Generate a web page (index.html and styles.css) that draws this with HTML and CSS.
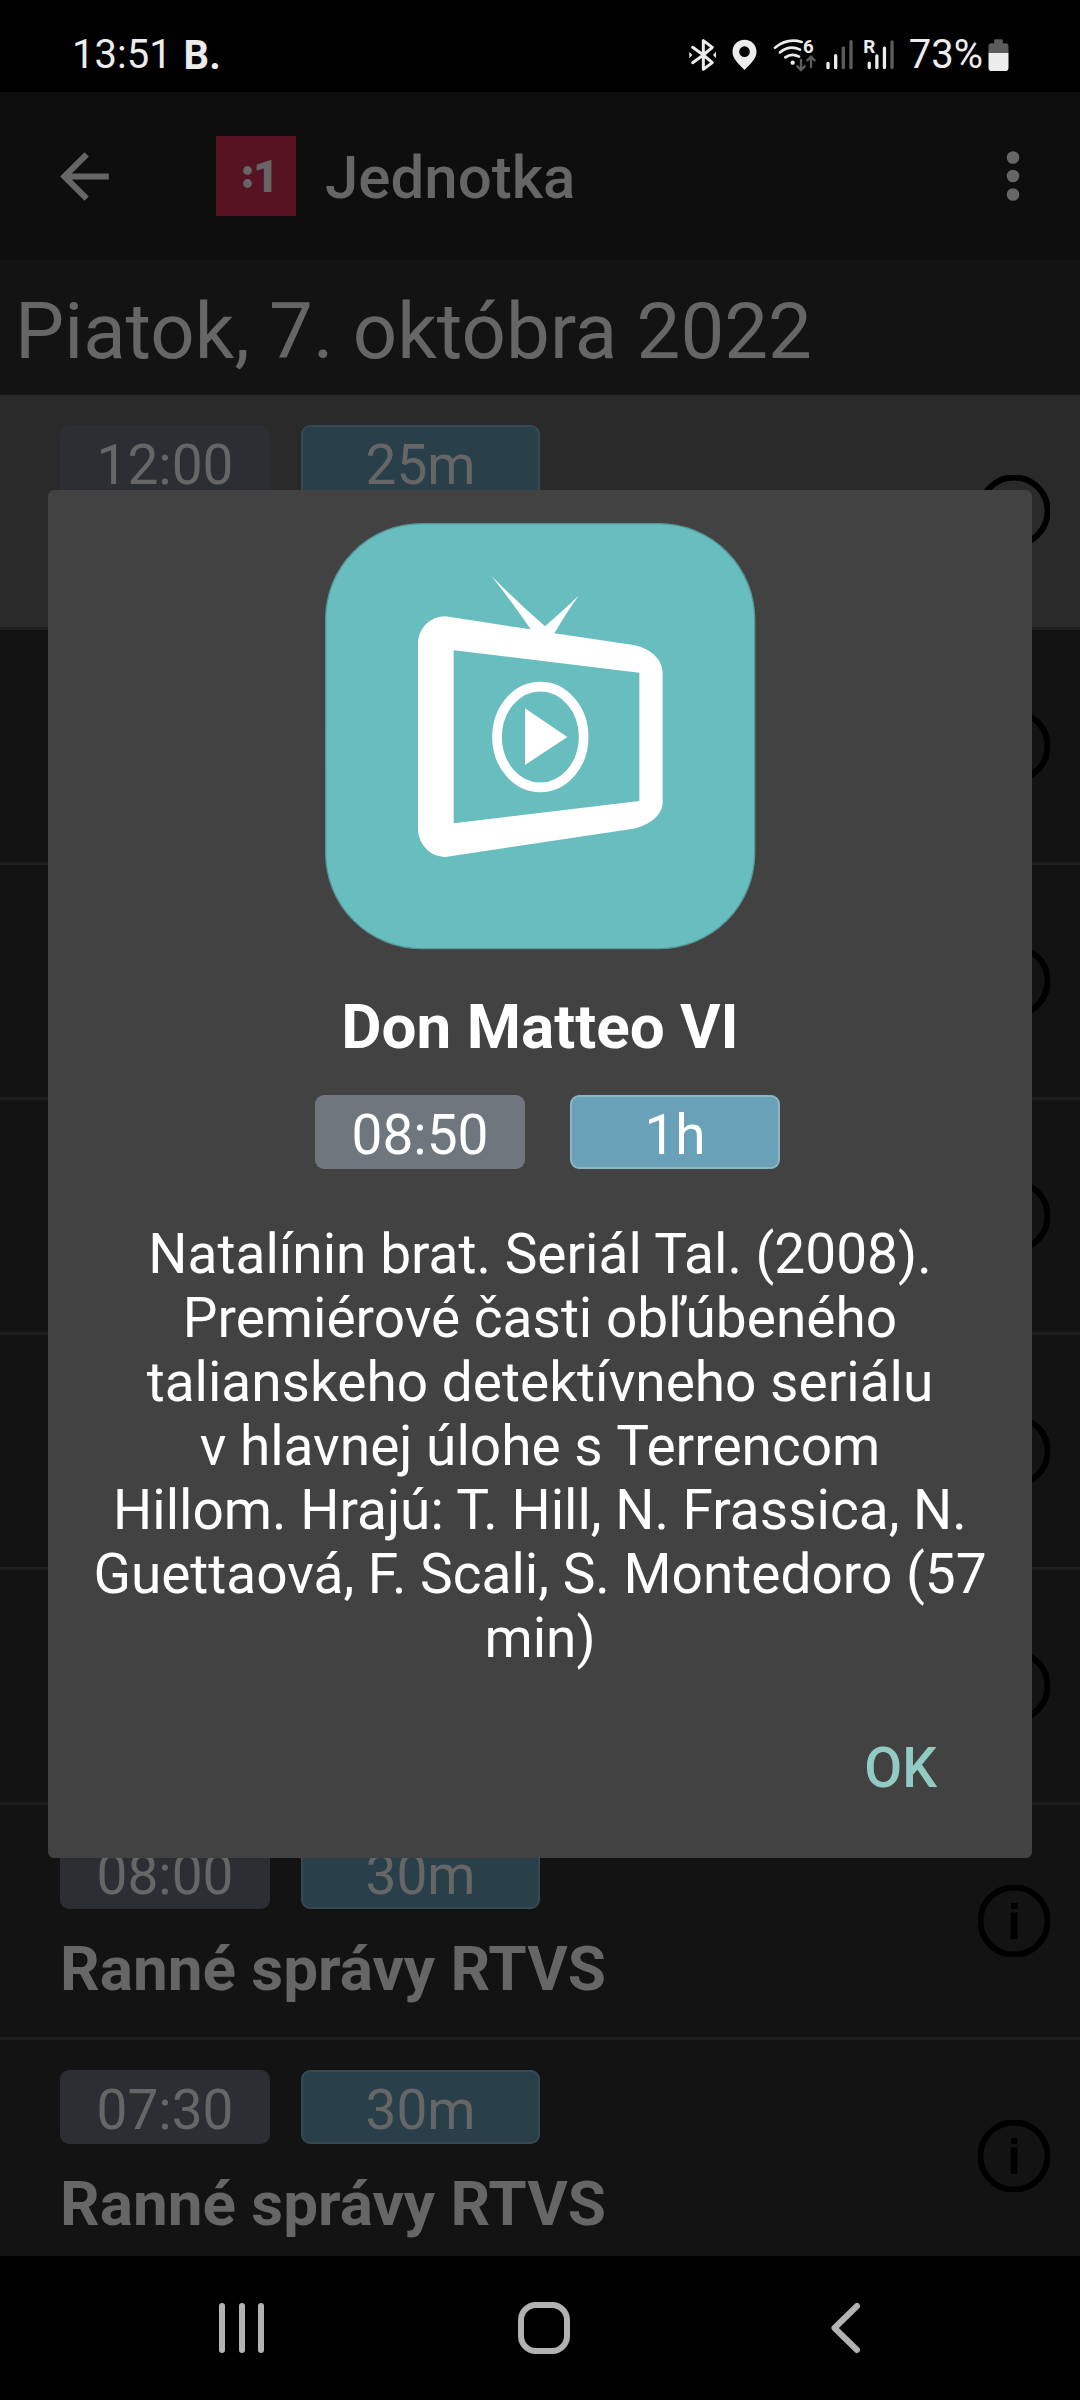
FILE: index.html
```
<!DOCTYPE html>
<html lang="sk">
<head>
<meta charset="utf-8">
<title>Jednotka</title>
<link rel="stylesheet" href="styles.css">
</head>
<body>
<svg class="defs" aria-hidden="true">
  <symbol id="info" viewBox="0 0 72 72">
    <circle cx="36" cy="36" r="33.6" fill="none" stroke="#000" stroke-width="6"/>
    <path d="M33 18h6.4v6H33zM32.6 27.5h6.8V54h-6.8z"/>
  </symbol>
</svg>
<div class="screen">
  <header class="status">
    <span class="clock">13:51</span>
    <span class="notif">B.</span>
    <div class="status-icons">
      <svg class="i-bt" viewBox="85 111 90 108" fill="none" stroke="#ececec" stroke-width="9" stroke-linecap="round" stroke-linejoin="round">
        <path d="M99 142L131 165L99 188M131 165L158 142L131 122V208L158 188L131 165"/>
        <path d="M89 155v20l9-10zM169 155v20l-9-10z" fill="#ececec" stroke="none"/>
      </svg>
      <svg class="i-pin" viewBox="215 111 80 108" fill="#ececec">
        <path fill-rule="evenodd" d="M255 119c-21 0-36 16-36 36 0 20 16 34 36 55 20-21 36-35 36-55 0-20-15-36-36-36zm0 20a16 16 0 1 1 0 32a16 16 0 0 1 0-32z"/>
      </svg>
      <svg class="i-wifi" viewBox="340 111 132 108" fill="none" stroke="#ececec" stroke-width="8" stroke-linecap="round">
        <path d="M346 143Q383 113 426 126M361 157Q390 134 421 149M377 172Q397 158 418 170"/>
        <circle cx="399" cy="188" r="6.5" fill="#ececec" stroke="none"/>
        <g stroke="#5c5c5c" stroke-width="7"><path d="M424 180v29M413 199l11 11l11-11M454 201v-30M443 181l11-11l11 11"/></g>
        <text class="glyph" x="430" y="159" font-size="56">6</text>
      </svg>
      <svg class="i-sig" viewBox="495 111 87 108" stroke="#ececec" stroke-width="10" stroke-linecap="round">
        <path d="M504 190v13M527 167v36"/><path stroke="#5c5c5c" d="M550 144v59M573 125v78"/>
      </svg>
      <svg class="i-rsig" viewBox="608 111 97 108" stroke="#ececec" stroke-width="10" stroke-linecap="round">
        <path d="M627 190v13M650 168v35M673 144v59"/><path stroke="#5c5c5c" d="M696 125v78"/>
        <text class="glyph" x="609" y="160" font-size="57">R</text>
      </svg>
    </div>
    <span class="pct">73%</span>
    <svg class="i-bat" viewBox="980 111 68 108">
      <path fill="#5c5c5c" d="M1001 130v-8q0-4 4-4h18q4 0 4 4v8h8q9 0 9 9v20h-60v-20q0-9 9-9z"/>
      <path fill="#ececec" d="M984 159h60v44q0 10-10 10h-40q-10 0-10-10z"/>
    </svg>
  </header>

  <div class="appbar">
    <svg class="back" viewBox="0 0 24 24"><path d="M20 11H7.83l5.59-5.59L12 4l-8 8 8 8 1.41-1.41L7.83 13H20v-2z"/></svg>
    <svg class="logo" viewBox="0 0 80 80"><circle cx="31.5" cy="34.5" r="4.4"/><circle cx="31.5" cy="47.5" r="4.4"/><text x="37" y="56">1</text></svg>
    <h1>Jednotka</h1>
    <svg class="more" viewBox="0 0 14 50"><circle cx="7" cy="6.5" r="6.3"/><circle cx="7" cy="25" r="6.3"/><circle cx="7" cy="43.5" r="6.3"/></svg>
  </div>

  <h2 class="date">Piatok, 7. októbra 2022</h2>

  <main class="list">
    <div class="row current"><div><div class="pills"><span class="pill">12:00</span><span class="pill dur">25m</span></div></div><svg class="info"><use href="#info"/></svg></div>
    <div class="row"><div></div><svg class="info"><use href="#info"/></svg></div>
    <div class="row"><div></div><svg class="info"><use href="#info"/></svg></div>
    <div class="row"><div></div><svg class="info"><use href="#info"/></svg></div>
    <div class="row"><div></div><svg class="info"><use href="#info"/></svg></div>
    <div class="row"><div></div><svg class="info"><use href="#info"/></svg></div>
    <div class="row"><div><div class="pills"><span class="pill">08:00</span><span class="pill dur">30m</span></div><div class="name">Ranné správy RTVS</div></div><svg class="info"><use href="#info"/></svg></div>
    <div class="row"><div><div class="pills"><span class="pill">07:30</span><span class="pill dur">30m</span></div><div class="name">Ranné správy RTVS</div></div><svg class="info"><use href="#info"/></svg></div>
  </main>

  <nav class="nav">
    <svg viewBox="0 0 72 60" stroke-width="6"><path d="M16 8v44M36 8v44M55 8v44"/></svg>
    <svg viewBox="0 0 72 60" stroke-width="6"><rect x="13" y="7" width="46" height="46" rx="15"/></svg>
    <svg viewBox="0 0 72 60" stroke-width="6"><path d="M47 8L24.5 30L47 52"/></svg>
  </nav>

  <section class="dialog" role="dialog">
    <svg class="tv" viewBox="0 0 1440 1410">
      <rect x="77" y="71" width="1287" height="1275" rx="287" fill="#68bdbf" stroke="#56989a" stroke-width="4"/>
      <g fill="#fff">
        <path fill-rule="evenodd" d="M354 435C354 383 392 349 436 349L692 388Q640 312 574 227Q650 305 735 379Q785 335 836 287Q800 337 763 400L1000 435C1055 446 1088 480 1088 520V905C1088 945 1050 975 1000 986L436 1071C392 1071 354 1035 354 985zM461 451V970L1018 903V518z"/>
        <path d="M675 625L802 711L675 795z"/>
      </g>
      <ellipse cx="721" cy="711" rx="130" ry="151" fill="none" stroke="#fff" stroke-width="29"/>
    </svg>
    <h3>Don Matteo VI</h3>
    <div class="pills"><span class="pill">08:50</span><span class="pill dur">1h</span></div>
    <p>Natalínin brat. Seriál Tal. (2008).<br>Premiérové časti obľúbeného<br>talianskeho detektívneho seriálu<br>v&nbsp;hlavnej úlohe s&nbsp;Terrencom<br>Hillom. Hrajú: T. Hill, N. Frassica, N.<br>Guettaová, F. Scali, S. Montedoro (57<br>min)</p>
    <button class="ok">OK</button>
  </section>
</div>
</body>
</html>
```
FILE: styles.css
```
* { box-sizing: border-box; }
body { margin: 0; background: #000; font-family: Roboto, sans-serif; }
h1, h2, h3, p { margin: 0; font-weight: 400; }
svg { display: block; flex: none; }
.defs { display: none; }
.screen {
  position: relative;
  display: flex;
  flex-direction: column;
  width: 1080px;
  height: 2400px;
  overflow: hidden;
  color: #666;
}

/* status bar */
.status {
  display: flex;
  align-items: center;
  height: 92px;
  padding: 18px 70px 0 72px;
  background: #000;
  color: #ececec;
  font-size: 40px;
  line-height: 46px;
}
.notif { margin: 2px 0 0 12px; font-weight: 700; }
.status-icons { display: flex; margin-left: auto; margin-right: 14px; }
.status svg { height: 36px; }
.glyph { fill: #ececec; stroke: none; font-weight: 700; }
.i-bt { width: 30px; margin-right: 13px; }
.i-pin { width: 27px; margin-right: 15px; }
.i-wifi { width: 44px; margin-right: 8px; }
.i-sig { width: 29px; margin-right: 9px; }
.i-rsig { width: 32px; }
.i-bat { width: 23px; margin-left: 4px; }

/* app bar */
.appbar {
  display: flex;
  align-items: center;
  height: 168px;
  padding: 0 60px 0 48px;
  background: #0e0e0e;
}
.back { width: 73px; height: 73px; margin-top: 1px; fill: #666; }
.logo {
  width: 80px;
  height: 80px;
  margin-left: 95px;
  background: #561423;
  fill: #666;
  font-size: 45px;
  font-weight: 900;
}
.appbar h1 { margin: 4px auto 0 29px; font-size: 60px; font-weight: 500; line-height: 70px; }
.more { width: 14px; height: 50px; fill: #666; }

.date {
  height: 135px;
  padding: 8px 0 0 15px;
  background: #131313;
  font-size: 78px;
  line-height: 128px;
}

/* programme list */
.list { height: 1861px; overflow: hidden; background: #131313; }
.row {
  display: flex;
  justify-content: space-between;
  height: 235px;
  padding: 30px 30px 0 60px;
  border-bottom: 3px solid #1e1e1e;
}
.row.current { background: #2a2a2a; }
.pills { display: flex; gap: 31px; }
.pill {
  width: 210px;
  height: 74px;
  padding-top: 8px;
  border-radius: 9px;
  background: #2b2f33;
  font-size: 55px;
  line-height: 64px;
  text-align: center;
}
.pill.dur { width: 239px; padding-top: 6px; border: 2px solid #374951; background: #293f4a; }
.name { margin-top: 24px; font-size: 62px; font-weight: 700; line-height: 72px; }
.info { width: 72px; height: 72px; margin-top: 50px; }

/* navigation bar */
.nav {
  display: flex;
  flex: 1;
  justify-content: space-between;
  padding: 42px 198px 0 206px;
  background: #000;
}
.nav svg { width: 72px; height: 60px; fill: none; stroke: #b2b2b2; stroke-linecap: round; stroke-linejoin: round; }

/* programme detail dialog */
.dialog {
  position: absolute;
  left: 48px;
  top: 490px;
  display: flex;
  flex-direction: column;
  align-items: center;
  width: 984px;
  height: 1368px;
  padding-top: 10px;
  border-radius: 6px;
  background: #424242;
  color: #fff;
}
.tv { width: 480px; height: 470px; }
.dialog h3 { margin-top: 21px; font-size: 62px; font-weight: 700; line-height: 72px; }
.dialog .pills { gap: 45px; margin: 32px 0 0 15px; }
.dialog .pill { background: #6f767e; }
.dialog .pill.dur { width: 210px; border-color: #8fb4c2; background: #68a1b8; }
.dialog p { margin-top: 53px; font-size: 55px; line-height: 64px; text-align: center; white-space: nowrap; }
.ok {
  align-self: flex-end;
  margin: 66px 95px 0 0;
  padding: 0;
  border: 0;
  background: none;
  color: #92cac4;
  font: 500 55px/64px Roboto, sans-serif;
}
```
